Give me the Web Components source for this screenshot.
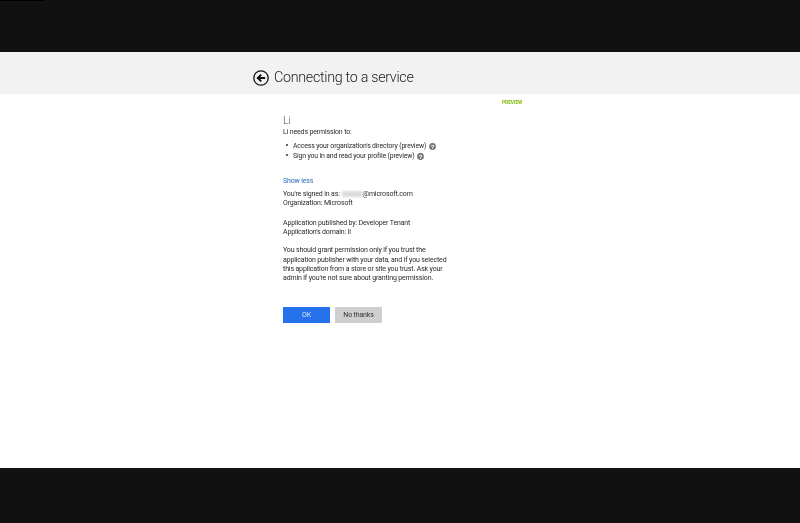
<!DOCTYPE html>
<html><head><meta charset="utf-8">
<style>html,body{margin:0;padding:0;height:100%;background:#111}body{font-family:Roboto,"Open Sans",sans-serif}</style>
</head><body>
<consent-page></consent-page>
<template id="t-help"><style>:host{display:inline-flex;margin-left:3px}svg{display:block}</style>
<svg width="7" height="7" viewBox="0 0 7 7"><circle cx="3.5" cy="3.5" r="3.4" fill="#777"/><text x="3.5" y="5.7" text-anchor="middle" font-size="6" font-weight="700" font-family="Liberation Sans" fill="#fff">?</text></svg></template>
<script>
class HelpIcon extends HTMLElement{constructor(){super();this.attachShadow({mode:'open'}).append(document.getElementById('t-help').content.cloneNode(true))}}
customElements.define('help-icon',HelpIcon);

class PageHeader extends HTMLElement{constructor(){super();this.attachShadow({mode:'open'}).innerHTML=`<style>
:host{display:flex;align-items:center;height:42px;background:#f2f2f2;padding:9px 0 0 253px;box-sizing:border-box;gap:5px;color:#222;filter:blur(.2px)}
svg{display:block;flex:none}
span{font-size:14.3px;font-weight:300;line-height:33px;letter-spacing:-.3px}
</style>
<svg width="16" height="16" viewBox="0 0 16 16" fill="none" stroke="#111"><circle cx="8" cy="8" r="7.2" stroke-width="1.3"/><path d="M12.2 8H5.2M8.2 4.6 4.8 8 8.2 11.4" stroke-width="2"/></svg>
<span><slot></slot></span>`}}
customElements.define('page-header',PageHeader);

class ActionButton extends HTMLElement{constructor(){super();this.attachShadow({mode:'open'}).innerHTML=`<style>
:host{display:flex;align-items:center;justify-content:center;width:47px;height:16px;font-size:7px;background:#cfcfcf;color:#333}
:host([primary]){background:#2672ec;color:#dfe9fb}
</style><slot></slot>`}}
customElements.define('action-button',ActionButton);

class ConsentPage extends HTMLElement{constructor(){super();this.attachShadow({mode:'open'}).innerHTML=`<style>
:host{display:flex;flex-direction:column;height:523px;background:#111;overflow:hidden;position:relative}
.line{position:absolute;left:0;top:0;width:44px;height:1px;background:#000}
.top{height:52px;flex:none}
.bottom{height:55px;flex:none}
.main{flex:1;background:#fff;padding:0 0 0 283px;color:#2b2b2b;font-size:7px;letter-spacing:-.15px;line-height:9.3px;min-height:0;filter:blur(.25px)}
.prev{font-size:4.8px;letter-spacing:0;font-weight:700;color:#7fba00;margin:5px 0 0 219px;line-height:7px}
h1{margin:8px 0 0;font-weight:300;font-size:10.6px;letter-spacing:0;line-height:14px;color:#555}
p{margin:0}
ul{list-style:none;margin:4px 0 0;padding:0}
li{display:flex;align-items:center;height:10px;padding-left:10px;position:relative;line-height:10px;font-size:6.9px}
li::before{content:"";position:absolute;left:3px;top:3px;width:2px;height:2px;border-radius:50%;background:#333}
.more{margin-top:16px;color:#2f6bc0}
.g{margin-top:3.5px}
.g2{margin-top:10.5px}
.g2.last{margin-top:8.5px}
.blur{display:inline-block;width:21px;height:6px;background:#dcdcdc;filter:blur(1px);margin:0 0 -.5px 2px}
.btns{display:flex;gap:5px;margin-top:24px}
</style>
<div class="line"></div>
<div class="top"></div>
<page-header>Connecting to a service</page-header>
<div class="main">
<div class="prev">PREVIEW</div>
<h1>Li</h1>
<p>Li needs permission to:</p>
<ul><li>Access your organization's directory (preview) <help-icon></help-icon></li>
<li>Sign you in and read your profile (preview) <help-icon></help-icon></li></ul>
<p class="more">Show less</p>
<div class="g"><p>You're signed in as:<span class="blur"></span>@microsoft.com</p><p>Organization: Microsoft</p></div>
<div class="g2"><p>Application published by: Developer Tenant</p><p>Application's domain: li</p></div>
<div class="g2 last"><p>You should grant permission only if you trust the</p><p>application publisher with your data, and if you selected</p><p>this application from a store or site you trust. Ask your</p><p>admin if you're not sure about granting permission.</p></div>
<div class="btns"><action-button primary>OK</action-button><action-button>No thanks</action-button></div>
</div>
<div class="bottom"></div>`}}
customElements.define('consent-page',ConsentPage);
</script>
</body></html>
